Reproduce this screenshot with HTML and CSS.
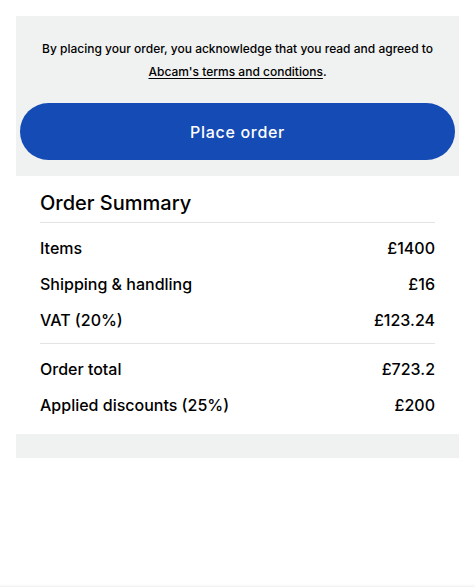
FILE: index.html
```html
<!DOCTYPE html>
<html lang="en">
<head>
<meta charset="utf-8">
<title>Order</title>
<link rel="stylesheet" href="styles.css">
</head>
<body>
<div class="page">
  <section class="place">
    <p class="terms">By placing your order, you acknowledge that you read and agreed to <a href="#">Abcam's terms and conditions</a>.</p>
    <button class="btn">Place order</button>
  </section>
  <section class="summary">
    <h2 class="title">Order Summary</h2>
    <div class="group">
      <div class="row"><span>Items</span><span>£1400</span></div>
      <div class="row"><span>Shipping &amp; handling</span><span>£16</span></div>
      <div class="row"><span>VAT (20%)</span><span>£123.24</span></div>
    </div>
    <div class="group">
      <div class="row"><span>Order total</span><span>£723.2</span></div>
      <div class="row"><span>Applied discounts (25%)</span><span>£200</span></div>
    </div>
  </section>
  <div class="foot"></div>
</div>
<div class="shade"></div>
</body>
</html>
```

FILE: styles.css
```css
* { box-sizing: border-box; }
html, body { margin: 0; padding: 0; background: #fff; }
body { font-family: Inter, "Noto Sans", sans-serif; color: #000; }
.page { padding: 16px 16px 0; }
.place {
  background: #f0f1f1;
  padding: 21px 4px 16px;
  display: flex;
  flex-direction: column;
  align-items: center;
}
.terms {
  margin: 0;
  font-size: 12px;
  line-height: 23px;
  text-align: center;
  padding: 0 18px;
  font-weight: 500;
}
.terms a { color: #000; text-decoration: underline; text-underline-offset: 2px; }
.btn {
  margin-top: 20px;
  width: 100%;
  height: 57px;
  border: 0;
  border-radius: 29px;
  background: #154bb5;
  color: #fff;
  font-family: inherit;
  font-size: 16px;
  font-weight: 500;
  letter-spacing: 0.7px;
}
.summary { padding: 12px 24px 11px; }
.title {
  margin: 0;
  font-size: 20px;
  line-height: 30px;
  font-weight: 500;
  padding-bottom: 4px;
  border-bottom: 1px solid #e3e4e6;
}
.group { padding: 7px 0 5px; }
.group + .group { border-top: 1px solid #e3e4e6; padding: 7px 0 0; }
.row {
  display: flex;
  justify-content: space-between;
  font-size: 16px;
  line-height: 36px;
  font-weight: 500;
}
.foot { height: 24px; background: #f0f1f1; }
.shade {
  position: fixed;
  left: 0; right: 0; bottom: 0;
  height: 3px;
  background: linear-gradient(#fff, #f2f2f2);
}
```
